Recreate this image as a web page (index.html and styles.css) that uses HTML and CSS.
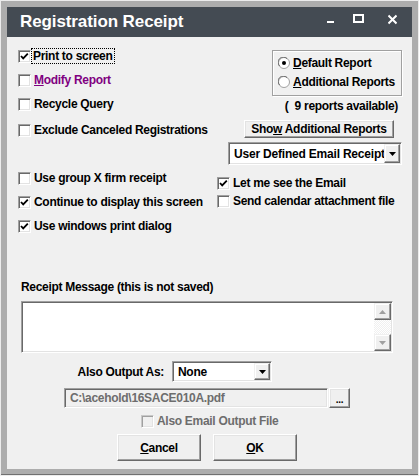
FILE: index.html
```html
<!DOCTYPE html>
<html>
<head>
<meta charset="utf-8">
<link rel="stylesheet" href="styles.css">
</head>
<body>
<div class="window">
  <div class="titlebar">
    <span class="title">Registration Receipt</span>
    <div class="caption">
      <svg class="cap-min" width="8" height="30" viewBox="0 0 8 30"><rect x="0" y="14" width="7" height="2" fill="#fff"/></svg>
      <svg class="cap-max" width="11" height="30" viewBox="0 0 11 30"><rect x="1" y="8" width="9" height="7" fill="none" stroke="#fff" stroke-width="2"/></svg>
      <svg class="cap-close" width="9" height="30" viewBox="0 0 9 30"><path d="M0.5 8.5 L8.5 16.5 M8.5 8.5 L0.5 16.5" stroke="#fff" stroke-width="2"/></svg>
    </div>
  </div>
  <div class="content">
    <div class="top">
      <div class="left">
        <div class="chk"><span class="box"><svg width="11" height="11" viewBox="0 0 11 11"><polyline points="2,5 4.2,7.4 8.8,2.6" fill="none" stroke="#000" stroke-width="1.8"/></svg></span><span class="lbl focus">Print to screen</span></div>
        <div class="chk gap8"><span class="box"></span><span class="lbl purple"><u>M</u>odify Report</span></div>
        <div class="chk gap8"><span class="box"></span><span class="lbl">Recycle Query</span></div>
        <div class="chk gap10"><span class="box"></span><span class="lbl">Exclude Canceled Registrations</span></div>
      </div>
      <div class="right">
        <div class="group">
          <div class="radio"><svg width="12" height="12" viewBox="0 0 12 12"><circle cx="6" cy="6" r="5.5" fill="#fff" stroke="#a0a0a0"/><path d="M1.6 9 A4.8 4.8 0 0 1 9 1.6" fill="none" stroke="#696969"/><circle cx="6" cy="6" r="2" fill="#000"/></svg><span class="lbl"><u>D</u>efault Report</span></div>
          <div class="radio"><svg width="12" height="12" viewBox="0 0 12 12"><circle cx="6" cy="6" r="5.5" fill="#fff" stroke="#a0a0a0"/><path d="M1.6 9 A4.8 4.8 0 0 1 9 1.6" fill="none" stroke="#696969"/></svg><span class="lbl"><u>A</u>dditional Reports</span></div>
        </div>
        <div class="avail">(&nbsp; 9 reports available)</div>
        <button class="btn show"><span>Sho<u>w</u> Additional Reports</span></button>
        <div class="combo wide">
          <span class="combo-text">User Defined Email Receipt</span>
          <span class="combo-btn"><svg width="7" height="4" viewBox="0 0 7 4"><polygon points="0,0 7,0 3.5,4" fill="#000"/></svg></span>
        </div>
      </div>
    </div>
    <div class="mid">
      <div class="left">
        <div class="chk"><span class="box"></span><span class="lbl">Use group X firm receipt</span></div>
        <div class="chk gap8"><span class="box"><svg width="11" height="11" viewBox="0 0 11 11"><polyline points="2,5 4.2,7.4 8.8,2.6" fill="none" stroke="#000" stroke-width="1.8"/></svg></span><span class="lbl">Continue to display this screen</span></div>
        <div class="chk gap8"><span class="box"><svg width="11" height="11" viewBox="0 0 11 11"><polyline points="2,5 4.2,7.4 8.8,2.6" fill="none" stroke="#000" stroke-width="1.8"/></svg></span><span class="lbl">Use windows print dialog</span></div>
      </div>
      <div class="right">
        <div class="chk"><span class="box"><svg width="11" height="11" viewBox="0 0 11 11"><polyline points="2,5 4.2,7.4 8.8,2.6" fill="none" stroke="#000" stroke-width="1.8"/></svg></span><span class="lbl">Let me see the Email</span></div>
        <div class="chk gap2"><span class="box"></span><span class="lbl">Send calendar attachment file</span></div>
      </div>
    </div>
    <div class="memo-label">Receipt Message (this is not saved)</div>
    <div class="memo">
      <div class="memo-body"></div>
      <div class="vscroll">
        <div class="sbtn"><svg width="7" height="4" viewBox="0 0 7 4"><polygon points="3.5,0 7,4 0,4" fill="#a0a0a0"/></svg></div>
        <div class="track"></div>
        <div class="sbtn"><svg width="7" height="4" viewBox="0 0 7 4"><polygon points="0,0 7,0 3.5,4" fill="#a0a0a0"/></svg></div>
      </div>
    </div>
    <div class="out-row">
      <span class="out-label">Also Output As:</span>
      <div class="combo small">
        <span class="combo-text">None</span>
        <span class="combo-btn"><svg width="7" height="4" viewBox="0 0 7 4"><polygon points="0,0 7,0 3.5,4" fill="#000"/></svg></span>
      </div>
    </div>
    <div class="path-row">
      <div class="path-field">C:\acehold\16SACE010A.pdf</div>
      <button class="btn dots"><span>...</span></button>
    </div>
    <div class="chk disabled"><span class="box"></span><span class="lbl">Also Email Output File</span></div>
    <div class="btn-row">
      <button class="btn big"><span><u>C</u>ancel</span></button>
      <button class="btn big"><span><u>O</u>K</span></button>
    </div>
  </div>
</div>
</body>
</html>
```
FILE: styles.css
```css
html, body {
  margin: 0;
  padding: 0;
}
body {
  font-family: "Liberation Sans", Arial, sans-serif;
  font-size: 12px;
  letter-spacing: -0.3px;
  font-weight: bold;
  color: #000;
}
.window {
  width: 419px;
  height: 476px;
  box-sizing: border-box;
  border: 1px solid #ececec;
  padding: 6px;
  background: #adadad;
  box-shadow: inset 0 -1px 0 #707070;
}
.titlebar {
  height: 30px;
  background: #444b53;
  display: flex;
  align-items: center;
  padding: 0 15px 0 13px;
  color: #fff;
}
.title {
  font-size: 17px;
  letter-spacing: -0.1px;
  font-weight: bold;
}
.caption {
  margin-left: auto;
  display: flex;
  height: 30px;
}
.caption svg { display: block; }
.cap-max { margin-left: 18px; }
.cap-close { margin-left: 24px; }

.content {
  height: 432px;
  background: #f0f0f0;
}
.lbl { white-space: nowrap; }
.chk, .radio {
  display: flex;
  align-items: center;
  height: 16px;
  gap: 3px;
}
.gap8 { margin-top: 8px; }
.gap10 { margin-top: 10px; }
.gap2 { margin-top: 2px; }
.box {
  width: 13px;
  height: 13px;
  box-sizing: border-box;
  background: #fff;
  border: 1px solid;
  border-color: #a0a0a0 #fff #fff #a0a0a0;
  box-shadow: inset 1px 1px 0 #696969, inset -1px -1px 0 #e3e3e3;
  display: flex;
  align-items: center;
  justify-content: center;
  flex: none;
}
.box svg { display: block; }
.radio svg { display: block; flex: none; }
.focus {
  outline: 1px dotted #000;
  outline-offset: 0;
  padding: 1px 1px;
  margin-left: -2px;
  line-height: 12px;
}
.purple { color: #800080; }

.top { display: flex; }
.top .left { padding: 11px 0 0 11px; }
.top .right {
  margin-left: auto;
  padding: 13px 10px 0 0;
  display: flex;
  flex-direction: column;
  align-items: flex-end;
}
.group {
  width: 130px;
  height: 46px;
  box-sizing: border-box;
  border: 1px solid #a0a0a0;
  box-shadow: inset 1px 1px 0 #fff, 1px 1px 0 #fff;
  padding: 4px 0 0 5px;
  display: flex;
  flex-direction: column;
  gap: 3px;
}
.avail {
  margin: 2px 4px 0 0;
  height: 16px;
  line-height: 16px;
  white-space: nowrap;
}
.btn {
  font: inherit;
  letter-spacing: inherit;
  color: #000;
  background: #f0f0f0;
  margin: 0;
  padding: 0;
  box-sizing: border-box;
  border: 1px solid;
  border-color: #fff #696969 #696969 #fff;
  box-shadow: inset -1px -1px 0 #a0a0a0, inset 1px 1px 0 #e3e3e3;
  display: flex;
  align-items: center;
  justify-content: center;
  white-space: nowrap;
}
.show {
  margin: 6px 8px 0 0;
  width: 150px;
  height: 18px;
}
.combo {
  display: flex;
  box-sizing: border-box;
  border: 1px solid;
  border-color: #a0a0a0 #fff #fff #a0a0a0;
  box-shadow: inset 1px 1px 0 #696969, inset -1px -1px 0 #e3e3e3;
  background: #fff;
  padding: 1px;
}
.combo-text {
  flex: 1;
  overflow: hidden;
  white-space: nowrap;
  padding-left: 3px;
  display: flex;
  align-items: center;
}
.wide .combo-text {
  padding-left: 4px;
  letter-spacing: -0.2px;
}
.combo-btn {
  width: 16px;
  flex: none;
  box-sizing: border-box;
  background: #f0f0f0;
  border: 1px solid;
  border-color: #f0f0f0 #696969 #696969 #f0f0f0;
  box-shadow: inset -1px -1px 0 #a0a0a0, inset 1px 1px 0 #fff;
  display: flex;
  align-items: center;
  justify-content: center;
}
.combo-btn svg { display: block; }
.wide {
  margin-top: 4px;
  width: 174px;
  height: 23px;
}

.mid { display: flex; padding-left: 11px; }
.mid .left { width: 199px; padding-top: 5px; }
.mid .right { padding-top: 10px; }

.memo-label {
  margin: 45px 0 0 14px;
  height: 16px;
  line-height: 16px;
}
.memo {
  margin: 6px 0 0 14px;
  width: 372px;
  height: 52px;
  box-sizing: border-box;
  border: 1px solid;
  border-color: #a0a0a0 #fff #fff #a0a0a0;
  box-shadow: inset 1px 1px 0 #696969, inset -1px -1px 0 #e3e3e3;
  background: #fff;
  display: flex;
  padding: 1px;
}
.memo-body { flex: 1; }
.vscroll {
  width: 17px;
  display: flex;
  flex-direction: column;
}
.sbtn {
  height: 17px;
  flex: none;
  box-sizing: border-box;
  background: #f0f0f0;
  border: 1px solid;
  border-color: #f0f0f0 #696969 #696969 #f0f0f0;
  box-shadow: inset -1px -1px 0 #a0a0a0, inset 1px 1px 0 #fff;
  display: flex;
  align-items: center;
  justify-content: center;
}
.sbtn svg { display: block; }
.track {
  flex: 1;
  background: repeating-conic-gradient(#f0f0f0 0 25%, #fff 0 50%) 0 0 / 2px 2px;
}

.out-row {
  display: flex;
  align-items: center;
  margin-top: 8px;
  height: 21px;
}
.out-label {
  width: 157px;
  text-align: right;
}
.small {
  margin-left: 8px;
  width: 100px;
  height: 21px;
}
.small .combo-text { padding-left: 4px; }

.path-row {
  display: flex;
  margin: 6px 0 0 57px;
  height: 20px;
}
.path-field {
  width: 264px;
  box-sizing: border-box;
  border: 1px solid;
  border-color: #a0a0a0 #fff #fff #a0a0a0;
  box-shadow: inset 1px 1px 0 #696969, inset -1px -1px 0 #e3e3e3;
  background: #f0f0f0;
  color: #6d6d6d;
  padding-left: 5px;
  display: flex;
  align-items: center;
  white-space: nowrap;
}
.dots {
  margin-left: 1px;
  width: 21px;
  height: 20px;
  font-size: 10px;
  padding-top: 2px;
}

.disabled {
  margin: 5px 0 0 134px;
  color: #6d6d6d;
}
.disabled .box {
  background: #f0f0f0;
  border-color: #c8c8c8 #fff #fff #c8c8c8;
  box-shadow: inset 1px 1px 0 #a0a0a0, inset -1px -1px 0 #e3e3e3;
}

.btn-row {
  display: flex;
  gap: 12px;
  margin: 5px 0 0 110px;
}
.big {
  width: 84px;
  height: 27px;
}
```
